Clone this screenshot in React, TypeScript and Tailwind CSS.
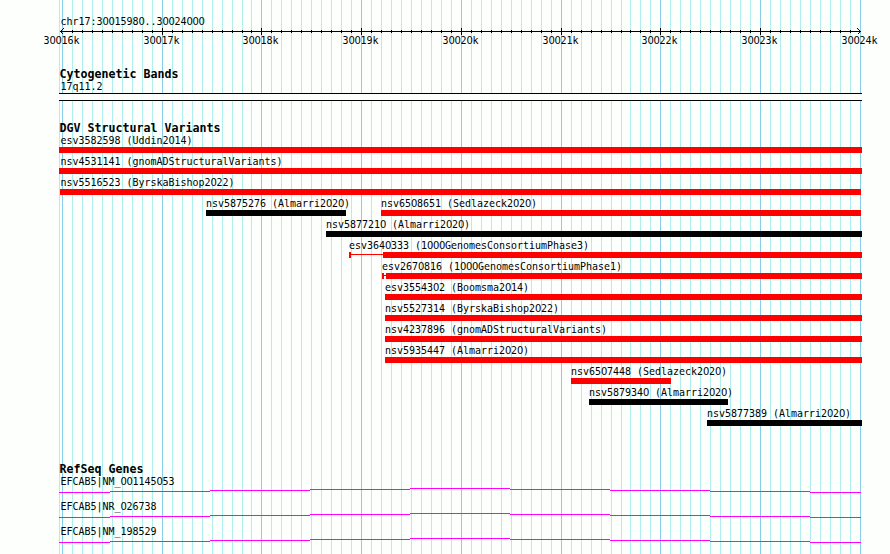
// Genome browser panel: ruler, cytoband, structural variants and RefSeq genes

type Feature = {
  name: string;
  start: number;
  end: number;
  color: "red" | "black";
  // x of the thick part when the start breakpoint is uncertain
  inner?: number;
};

const variantRows: Feature[][] = [
  [{ name: "esv3582598 (Uddin2014)", start: 59, end: 862, color: "red" }],
  [{ name: "nsv4531141 (gnomADStructuralVariants)", start: 59, end: 862, color: "red" }],
  [{ name: "nsv5516523 (ByrskaBishop2022)", start: 60, end: 861, color: "red" }],
  [
    { name: "nsv5875276 (Almarri2020)", start: 206, end: 346, color: "black" },
    { name: "nsv6508651 (Sedlazeck2020)", start: 381, end: 861, color: "red" },
  ],
  [{ name: "nsv5877210 (Almarri2020)", start: 326, end: 862, color: "black" }],
  [{ name: "esv3640333 (1000GenomesConsortiumPhase3)", start: 349, end: 862, color: "red", inner: 383 }],
  [{ name: "esv2670816 (1000GenomesConsortiumPhase1)", start: 382, end: 862, color: "red", inner: 386 }],
  [{ name: "esv3554302 (Boomsma2014)", start: 385, end: 862, color: "red" }],
  [{ name: "nsv5527314 (ByrskaBishop2022)", start: 385, end: 862, color: "red" }],
  [{ name: "nsv4237896 (gnomADStructuralVariants)", start: 385, end: 862, color: "red" }],
  [{ name: "nsv5935447 (Almarri2020)", start: 385, end: 862, color: "red" }],
  [{ name: "nsv6507448 (Sedlazeck2020)", start: 571, end: 671, color: "red" }],
  [{ name: "nsv5879340 (Almarri2020)", start: 589, end: 728, color: "black" }],
  [{ name: "nsv5877389 (Almarri2020)", start: 707, end: 862, color: "black" }],
];

const genes = ["EFCAB5|NM_001145053", "EFCAB5|NR_026738", "EFCAB5|NM_198529"];

// One tick per 100 bp
const ticks = Array.from({ length: 81 }, (_, i) => ({
  x: Math.floor(62.48 + i * 9.974),
  major: i % 10 === 0,
}));

const majors = ticks.filter((t) => t.major);

function Label({ text }: { text: string }) {
  return (
    <div className="h-3 origin-[0_10px] scale-y-110 whitespace-pre font-['DejaVu_Sans_Mono',monospace] text-[10px] leading-[14px] tracking-[-0.02px]">
      {text.split(/(0+)/).map((part, i) =>
        part.startsWith("0") ? (
          // plain zeros, the mono face has a dotted one
          <span key={i} className="font-['DejaVu_Sans',sans-serif] tracking-[-0.362px]">
            {part}
          </span>
        ) : (
          part
        ),
      )}
    </div>
  );
}

function Heading({ text }: { text: string }) {
  return (
    <h2 className="h-3 pl-[59.5px] whitespace-pre font-['DejaVu_Sans_Mono',monospace] text-[11.63px] font-bold leading-3">
      {text}
    </h2>
  );
}

function GridLines() {
  return (
    <svg className="absolute inset-0" width="890" height="554" shapeRendering="crispEdges">
      <rect x="59" y="0" width="1" height="554" fill="#afeeee" />
      {ticks.map((t) => (
        <rect key={t.x} x={t.x} y="0" width="1" height="554" fill={t.major ? "#87ceeb" : "#afeeee"} />
      ))}
    </svg>
  );
}

function Ruler() {
  return (
    <svg className="block" width="890" height="9" shapeRendering="crispEdges">
      <rect x="60" y="4" width="801" height="1" />
      {ticks.slice(1, -1).map((t) => (
        <rect key={t.x} x={t.x} y={t.major ? 1 : 3} width="1" height={t.major ? 7 : 3} />
      ))}
      <path d="M63.5 1.5 L60.5 4.5 L63.5 7.5 M857.5 1.5 L860.5 4.5 L857.5 7.5" fill="none" stroke="#000" />
    </svg>
  );
}

function Variant({ feature }: { feature: Feature }) {
  const { name, start, end, color, inner } = feature;
  const fill = color === "red" ? "bg-[#ff0000]" : "bg-black";
  return (
    <div className="col-start-1 row-start-1 h-[21px]" style={{ marginLeft: start }}>
      {/* labels never start left of the panel padding */}
      <div style={{ paddingLeft: Math.max(60.5 - start, 0) }}>
        <Label text={name} />
      </div>
      <div className="mt-px flex h-1.5" style={{ width: end - start }}>
        {inner && (
          <>
            <div className={`w-0.5 ${fill}`} />
            <div className={`mt-0.5 h-px ${fill}`} style={{ width: inner - start - 2 }} />
          </>
        )}
        <div className={`flex-1 ${fill}`} />
      </div>
    </div>
  );
}

function Gene({ name }: { name: string }) {
  return (
    <div className="h-[25px]">
      <div className="pl-[60.5px]">
        <Label text={name} />
      </div>
      <svg className="block" width="890" height="8" shapeRendering="crispEdges">
        {[5, 4, 3, 2, 1, 2, 3, 4, 5].map((y, i) => {
          const from = i === 0 ? 59 : 10 + i * 100;
          const to = i === 8 ? 861 : 110 + i * 100;
          return <rect key={i} x={from} y={y} width={to - from} height="1" fill="#ff00ff" />;
        })}
      </svg>
    </div>
  );
}

export default function App() {
  return (
    <div className="relative h-[554px] w-[890px] overflow-hidden bg-[#fdfffc] text-black">
      <GridLines />
      <main className="relative pt-[15px]">
        <section className="h-[53px]">
          <div className="pl-[60.5px]">
            <Label text="chr17:30015980..30024000" />
          </div>
          <Ruler />
          <div className="-mt-0.5 flex">
            {majors.map((t, i) => (
              <div
                key={t.x}
                className="w-9 shrink-0"
                style={{ marginLeft: i === 0 ? t.x - 18.5 : t.x - majors[i - 1].x - 36 }}
              >
                <Label text={`${30016 + i}k`} />
              </div>
            ))}
          </div>
        </section>

        <section className="h-[54px]">
          <Heading text="Cytogenetic Bands" />
          <div className="pl-[60.5px]">
            <Label text="17q11.2" />
          </div>
          <div className="mt-px ml-[59px] h-2 w-[803px] border-y border-black bg-[#fdfffc]" />
        </section>

        <section className="h-[341px]">
          <Heading text="DGV Structural Variants" />
          {variantRows.map((row) => (
            <div key={row[0].name} className="grid">
              {row.map((f) => (
                <Variant key={f.name} feature={f} />
              ))}
            </div>
          ))}
        </section>

        <section>
          <Heading text="RefSeq Genes" />
          {genes.map((g) => (
            <Gene key={g} name={g} />
          ))}
        </section>
      </main>
    </div>
  );
}
